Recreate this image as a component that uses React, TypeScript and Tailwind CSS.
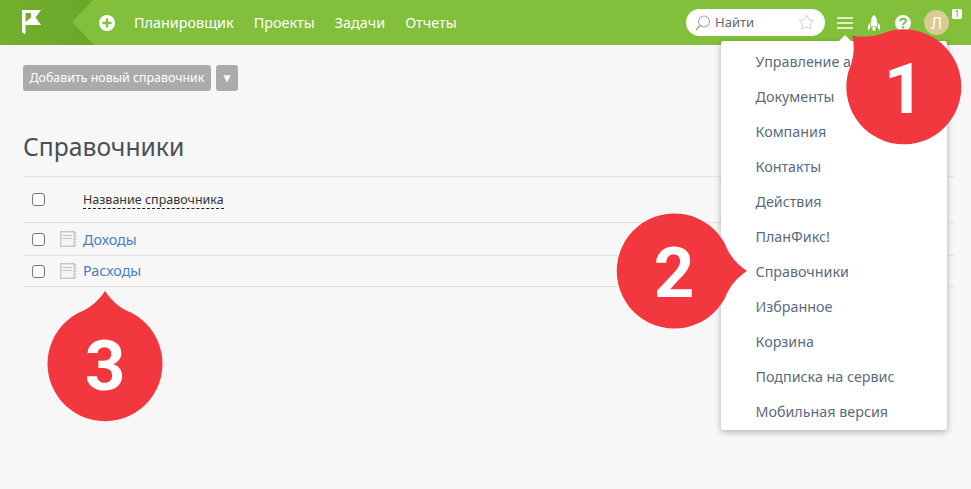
import { Star } from "lucide-react";

const NAV = ["Планировщик", "Проекты", "Задачи", "Отчеты"];

const MENU = [
  "Управление аккаунтом",
  "Документы",
  "Компания",
  "Контакты",
  "Действия",
  "ПланФикс!",
  "Справочники",
  "Избранное",
  "Корзина",
  "Подписка на сервис",
  "Мобильная версия",
];

function BookIcon() {
  return (
    <svg width="17" height="16" viewBox="0 0 17 16" fill="none" className="shrink-0">
      <rect x="0.7" y="0.7" width="13.600" height="14.600" fill="#f4f4f4" stroke="#c6c6c6" strokeWidth="1.400" />
      <path d="M3 4.500h9M3 7.500h9" stroke="#c6c6c6" />
      <path d="M16 1v14" stroke="#c6c6c6" strokeDasharray="2 1" />
    </svg>
  );
}

function Callout({ n, rotate, className }: { n: string; rotate: string; className: string }) {
  return (
    <div className={`absolute h-[150px] w-[150px] ${className}`}>
      <svg width="150" height="150" viewBox="-75 -75 150 150" className={`absolute inset-0 ${rotate}`}>
        <path
          d="M0 -73C6 -64 14 -56 27 -51A57.5 57.5 0 1 1 -27 -51C-14 -56 -6 -64 0 -73Z"
          fill="#f3373f"
        />
      </svg>
      <span className="absolute inset-0 flex items-center justify-center pt-[3px] font-['Roboto',sans-serif] text-[71px] leading-none font-bold text-white">
        {n}
      </span>
    </div>
  );
}

function Row({ name, height, textClass }: { name: string; height: string; textClass: string }) {
  return (
    <div className={`flex items-center border-b border-[#e3e3e3] pl-[9px] ${height}`}>
      <span className="h-[13px] w-[13px] rounded-[3px] border border-[#777] bg-white" />
      <span className="ml-[15px]">
        <BookIcon />
      </span>
      <a className={`ml-[6px] text-[14.3px] text-[#4a7fc0] ${textClass}`}>{name}</a>
    </div>
  );
}

export default function App() {
  return (
    <div className="relative flex h-[489px] flex-col overflow-hidden bg-[#f7f7f7] font-['Noto_Sans',sans-serif]">
      {/* Top bar */}
      <header className="flex h-[45px] shrink-0 items-center bg-[#82c03b]">
        <div className="flex h-full w-[94px] items-center bg-gradient-to-r from-[#74b02f] to-[#6aa628] pl-[22px] [clip-path:polygon(0_0,93px_0,72px_22px,94px_45px,0_45px)]">
          <svg width="20" height="24" viewBox="0 0 20 24" className="-mt-[2px]">
            <path
              fillRule="evenodd"
              d="M0 0h19l-5.500 7.500L19 15H3.500v8a1 1 0 0 1-2 0H1a1 1 0 0 1-1-1zM3.500 3v9L9 7.500 9 3z"
              fill="#fff"
            />
          </svg>
        </div>
        <svg width="16" height="16" viewBox="0 0 16 16" className="ml-[5px]">
          <circle cx="8" cy="8" r="8" fill="#fff" />
          <path d="M8 3.500v9M3.500 8h9" stroke="#82c03b" strokeWidth="2.500" />
        </svg>
        <nav className="ml-[19px] flex gap-[20px] text-[14.4px] text-white">
          {NAV.map((item) => (
            <a key={item}>{item}</a>
          ))}
        </nav>
        <div className="ml-auto flex items-center pr-[22px]">
          <div className="flex h-[27px] w-[139px] items-center rounded-full bg-white pl-[9px] pr-[10px] text-[13px] text-[#666]">
            <svg width="15" height="16" viewBox="0 0 15 16" fill="none" className="shrink-0">
              <circle cx="9" cy="6.500" r="5.500" stroke="#a5a5a5" strokeWidth="1.100" />
              <path d="M5 10.500L1 15" stroke="#a5a5a5" strokeWidth="1.400" />
            </svg>
            <span className="ml-[5px]">Найти</span>
            <Star size={17} strokeWidth={1} className="ml-auto text-[#bbb]" />
          </div>
          <svg width="16" height="12" viewBox="0 0 16 12" className="ml-[12px]">
            <path d="M0 1h16M0 6h16M0 11h16" stroke="#fff" strokeWidth="1.500" />
          </svg>
          <svg width="12" height="16" viewBox="0 0 12 16" className="ml-[15px]">
            <path d="M6 0C8 1.500 9 4 9 7v4.500H3V7C3 4 4 1.500 6 0zM2.300 7.500V13L0 15.500V10.500zM9.700 7.500V13L12 15.500V10.500zM4.500 12h3v3.500h-3z" fill="#fff" />
          </svg>
          <svg width="16" height="16" viewBox="0 0 16 16" className="ml-[15px]">
            <circle cx="8" cy="8" r="8" fill="#fff" />
            <path d="M5.200 6.200C5.300 4.500 6.500 3.700 8 3.700c1.700 0 2.900 1 2.900 2.300 0 2-2.800 2-2.800 3.900" fill="none" stroke="#82c03b" strokeWidth="2" />
            <circle cx="8.100" cy="12.200" r="1.200" fill="#82c03b" />
          </svg>
          <div className="relative ml-[13px] flex h-[25px] w-[25px] items-center justify-center rounded-full bg-[#d8cb95] text-[16px] text-white">
            Л
            <span className="absolute -right-[13px] -top-[1px] flex h-[10px] w-[10px] items-center justify-center rounded-[2px] bg-white text-[8px] leading-none text-[#777]">
              1
            </span>
          </div>
        </div>
      </header>

      {/* Content */}
      <main className="px-[23px] pr-[16px] pt-[20px]">
        <div className="flex gap-[5px]">
          <button className="h-[26px] w-[188px] rounded-[3px] bg-[#ababab] text-[12.4px] text-white">
            Добавить новый справочник
          </button>
          <button className="flex h-[26px] w-[22px] items-center justify-center rounded-[3px] bg-[#ababab] text-[12px] text-white">
            ▼
          </button>
        </div>
        <h1 className="mt-[37px] text-[24.700px] leading-[38px] text-[#4a4f57]">Справочники</h1>
        <div className="mt-[10px] flex h-[47px] items-center border-y border-[#e3e3e3] pl-[9px]">
          <span className="h-[13px] w-[13px] rounded-[3px] border border-[#777] bg-white" />
          <span className="ml-[38px] border-b border-dashed border-[#222] text-[12.500px] leading-[17px] text-[#333]">
            Название справочника
          </span>
        </div>
        <Row name="Доходы" height="h-[33px]" textClass="pt-[2px]" />
        <Row name="Расходы" height="h-[31px]" textClass="" />
      </main>

      {/* Dropdown */}
      <div className="absolute left-[721px] top-[41px] h-[389px] w-[226px] rounded-[3px] bg-white pt-[3px] shadow-[0_2px_6px_rgba(0,0,0,0.3)]">
        <span className="absolute -top-[6px] left-[118px] h-0 w-0 border-x-[6px] border-b-[6px] border-x-transparent border-b-white" />
        {MENU.map((item) => (
          <div key={item} className="flex h-[35px] items-center whitespace-nowrap pl-[34.500px] text-[14.300px] text-[#5b6b80]">
            {item}
          </div>
        ))}
      </div>

      {/* Callouts */}
      <Callout n="1" rotate="-rotate-45" className="left-[829px] top-[12px]" />
      <Callout n="2" rotate="rotate-90" className="left-[599px] top-[196px]" />
      <Callout n="3" rotate="" className="left-[30px] top-[289px]" />
    </div>
  );
}
